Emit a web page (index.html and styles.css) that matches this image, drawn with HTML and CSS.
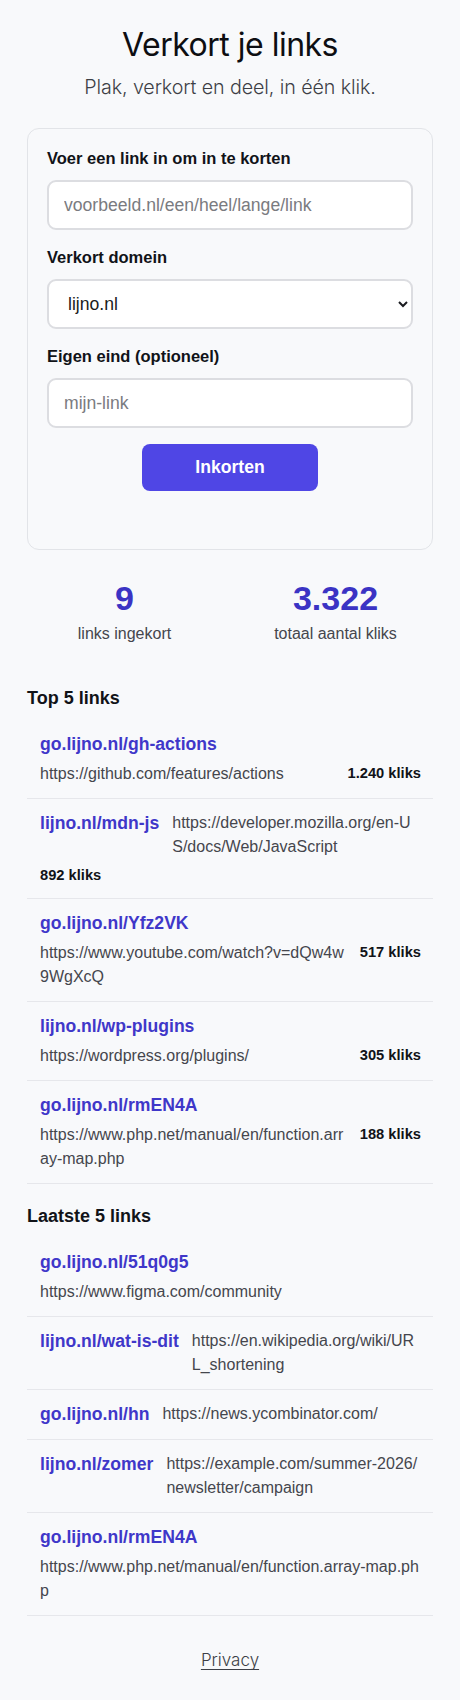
FILE: index.html
```html
<!DOCTYPE html>
<html lang="nl">
<head>
<meta charset="utf-8">
<title>Verkort je links</title>
<link rel="stylesheet" href="styles.css">
</head>
<body>
<main class="page">
  <header class="hero">
    <h1 class="hero-title">Verkort je links</h1>
    <p class="hero-sub">Plak, verkort en deel, in één klik.</p>
  </header>

  <form class="card">
    <label class="field-label" for="url">Voer een link in om in te korten</label>
    <input class="field" id="url" type="text" placeholder="voorbeeld.nl/een/heel/lange/link">

    <label class="field-label" for="domain">Verkort domein</label>
    <select class="field select" id="domain">
      <option>lijno.nl</option>
      <option>go.lijno.nl</option>
    </select>

    <label class="field-label" for="slug">Eigen eind (optioneel)</label>
    <input class="field" id="slug" type="text" placeholder="mijn-link">

    <div class="actions">
      <button class="btn" type="button">Inkorten</button>
    </div>
    <div class="result"></div>
  </form>

  <section class="stats">
    <div class="stat">
      <div class="stat-num">9</div>
      <div class="stat-label">links ingekort</div>
    </div>
    <div class="stat">
      <div class="stat-num">3.322</div>
      <div class="stat-label">totaal aantal kliks</div>
    </div>
  </section>

  <section class="block">
    <h2 class="block-title">Top 5 links</h2>
    <ul class="links">
      <li class="link-row">
        <a class="short" href="#">go.lijno.nl/gh-actions</a>
        <span class="long">https://github.com/features/actions</span>
        <span class="clicks">1.240 kliks</span>
      </li>
      <li class="link-row">
        <a class="short" href="#">lijno.nl/mdn-js</a>
        <span class="long">https://developer.mozilla.org/en-US/docs/Web/JavaScript</span>
        <span class="clicks">892 kliks</span>
      </li>
      <li class="link-row">
        <a class="short" href="#">go.lijno.nl/Yfz2VK</a>
        <span class="long">https://www.youtube.com/watch?v=dQw4w9WgXcQ</span>
        <span class="clicks">517 kliks</span>
      </li>
      <li class="link-row">
        <a class="short" href="#">lijno.nl/wp-plugins</a>
        <span class="long">https://wordpress.org/plugins/</span>
        <span class="clicks">305 kliks</span>
      </li>
      <li class="link-row">
        <a class="short" href="#">go.lijno.nl/rmEN4A</a>
        <span class="long">https://www.php.net/manual/en/function.array-map.php</span>
        <span class="clicks">188 kliks</span>
      </li>
    </ul>
  </section>

  <section class="block">
    <h2 class="block-title">Laatste 5 links</h2>
    <ul class="links">
      <li class="link-row">
        <a class="short" href="#">go.lijno.nl/51q0g5</a>
        <span class="long">https://www.figma.com/community</span>
      </li>
      <li class="link-row">
        <a class="short" href="#">lijno.nl/wat-is-dit</a>
        <span class="long">https://en.wikipedia.org/wiki/URL_shortening</span>
      </li>
      <li class="link-row">
        <a class="short" href="#">go.lijno.nl/hn</a>
        <span class="long">https://news.ycombinator.com/</span>
      </li>
      <li class="link-row">
        <a class="short" href="#">lijno.nl/zomer</a>
        <span class="long">https://example.com/summer-2026/newsletter/campaign</span>
      </li>
      <li class="link-row">
        <a class="short" href="#">go.lijno.nl/rmEN4A</a>
        <span class="long">https://www.php.net/manual/en/function.array-map.php</span>
      </li>
    </ul>
  </section>

  <footer class="foot">
    <a class="foot-link" href="#">Privacy</a>
  </footer>
</main>
</body>
</html>
```

FILE: styles.css
```css
* {
  box-sizing: border-box;
}

html,
body {
  margin: 0;
  background: #f8f9fb;
}

body {
  font-family: "Liberation Sans", Arial, sans-serif;
  color: #111318;
}

.page {
  padding: 26px 27px 40px;
}

/* Header */
.hero {
  text-align: center;
}

.hero-title {
  margin: 0;
  font-family: Inter, "Noto Sans", sans-serif;
  font-weight: 400;
  font-size: 32px;
  line-height: 1.2;
  letter-spacing: -0.5px;
  color: #0d0e12;
}

.hero-sub {
  margin: 9px 0 0;
  font-family: Inter, "Noto Sans", sans-serif;
  font-weight: 300;
  font-size: 19.7px;
  line-height: 28px;
  letter-spacing: -0.1px;
  color: #3d3f46;
}

/* Form card */
.card {
  margin-top: 27px;
  padding: 20px 19px 20px;
  border: 1px solid #e2e4e8;
  border-radius: 12px;
  background: #f8f9fb;
}

.field-label {
  display: block;
  margin: 0 0 12px;
  font-size: 16.5px;
  font-weight: 700;
  color: #111318;
}

.field {
  display: block;
  width: 100%;
  height: 50px;
  margin: 0 0 18px;
  padding: 0 15px;
  border: 2px solid #dcdde1;
  border-radius: 9px;
  background: #fff;
  font-family: "Liberation Sans", Arial, sans-serif;
  font-size: 17.6px;
  color: #1a1b20;
}

.field::placeholder {
  color: #7a7b80;
}

.select {
  padding: 0 11px 0 15px;
}

.actions {
  display: flex;
  justify-content: center;
  margin-top: -2px;
}

.btn {
  width: 176px;
  height: 47px;
  border: 0;
  border-radius: 8px;
  background: #4f46e5;
  color: #fff;
  font-family: "Liberation Sans", Arial, sans-serif;
  font-size: 17.6px;
  font-weight: 700;
}

.result {
  min-height: 20px;
  margin-top: 18px;
}

/* Stats */
.stats {
  display: grid;
  grid-template-columns: 1fr 1fr;
  gap: 16px;
  margin-top: 29px;
  text-align: center;
}

.stat-num {
  font-size: 34px;
  font-weight: 700;
  line-height: 39px;
  color: #3b33c4;
}

.stat-label {
  margin-top: 7px;
  font-size: 16px;
  color: #45464d;
}

/* Link lists */
.block {
  margin-top: 45px;
}

.block + .block {
  margin-top: 22px;
}

.block-title {
  margin: 0 0 11px;
  font-size: 18px;
  font-weight: 700;
  line-height: 21px;
  color: #111318;
}

.links {
  list-style: none;
  margin: 0;
  padding: 0;
}

.link-row {
  display: flex;
  flex-wrap: wrap;
  align-items: flex-start;
  column-gap: 13px;
  row-gap: 5px;
  padding: 12px 12px 12px 13px;
  border-bottom: 1px solid #e6e7eb;
}

.short {
  flex: none;
  font-size: 17.6px;
  font-weight: 700;
  line-height: 25px;
  color: #3f37c9;
  text-decoration: none;
}

.long {
  flex: 1 1 224px;
  min-width: 0;
  font-size: 16px;
  line-height: 24px;
  color: #45464d;
  word-break: break-all;
}

.clicks {
  flex: none;
  font-size: 14.7px;
  font-weight: 700;
  line-height: 22px;
  color: #111318;
}

/* Footer */
.foot {
  margin-top: 34px;
  text-align: center;
}

.foot-link {
  font-family: Inter, "Noto Sans", sans-serif;
  font-weight: 300;
  font-size: 17px;
  color: #3d3f46;
  text-decoration: underline;
  text-underline-offset: 3px;
}
```
